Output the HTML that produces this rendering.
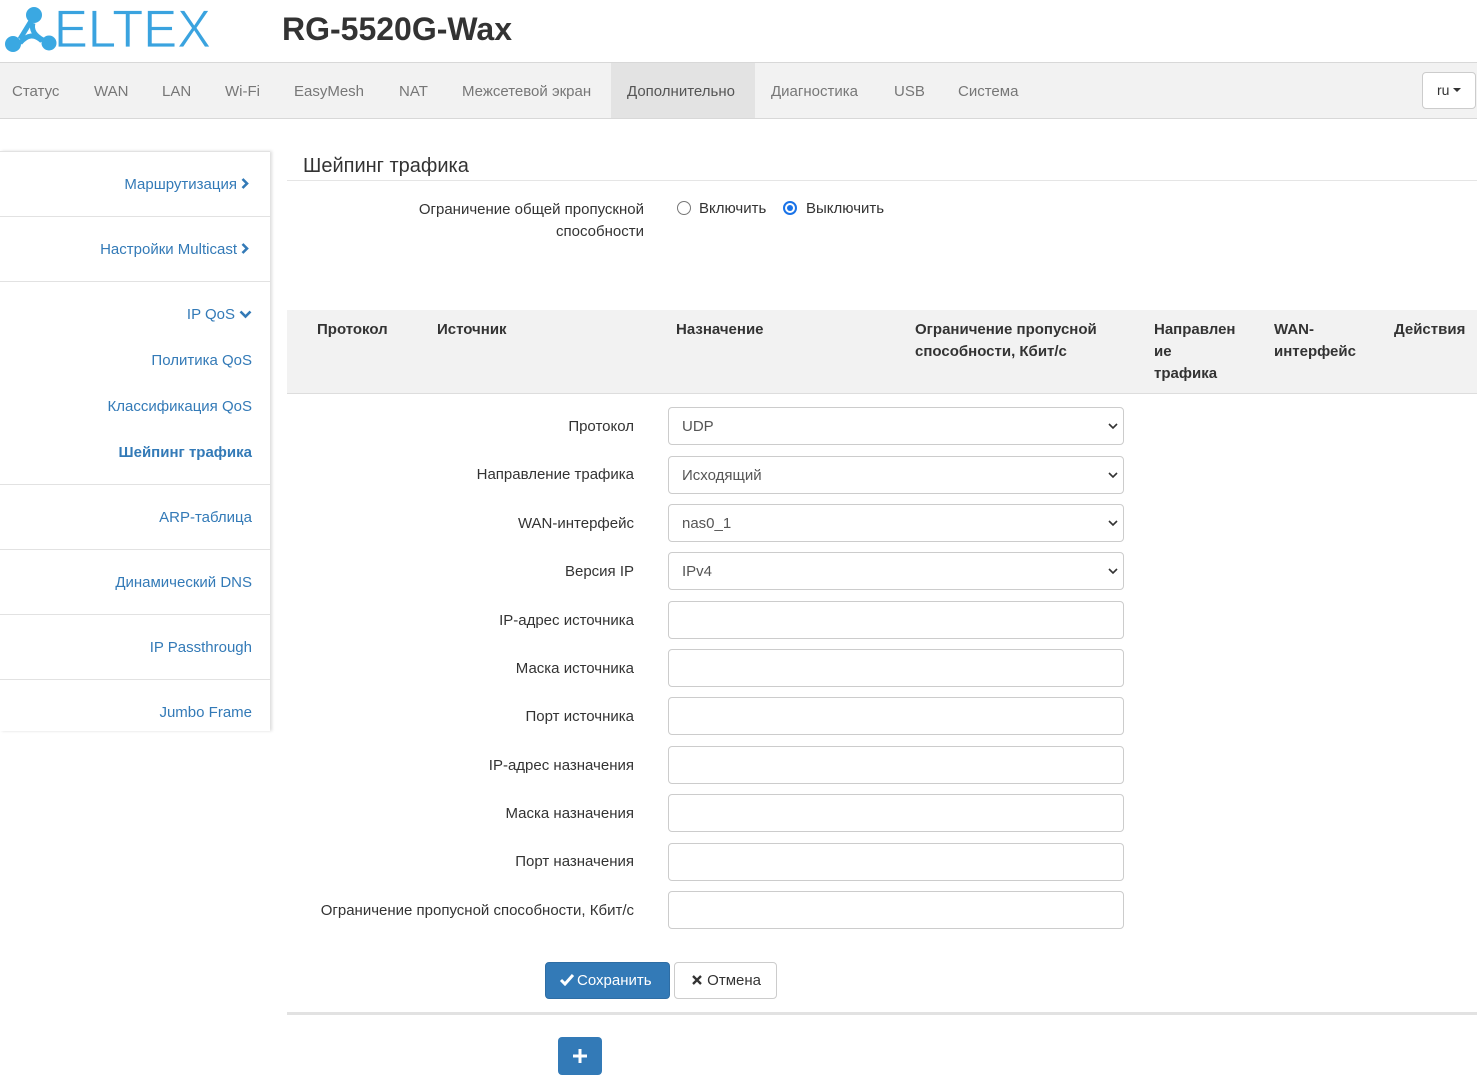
<!DOCTYPE html>
<html><head><meta charset="utf-8"><style>
*{box-sizing:border-box;margin:0;padding:0}
body{width:1477px;height:1076px;position:relative;background:#fff;font-family:"Liberation Sans",Arial,sans-serif;color:#333;overflow:hidden;font-size:15px}
.a{position:absolute;white-space:nowrap}
.nav{position:absolute;left:0;top:62px;width:1477px;height:57px;background:#f2f2f2;border-top:1px solid #d8d8d8;border-bottom:1px solid #d8d8d8}
.nav span{position:absolute;top:20px;color:#777;font-size:15px}
.side{position:absolute;left:0;top:151px;width:270px;height:580px;box-shadow:2px 0 3px #ddd}
.line{position:absolute;left:0;width:270px;height:1px;background:#e2e2e2}
.sl{position:absolute;right:18px;color:#337ab7;font-size:15px;white-space:nowrap}
.sl svg{margin-left:4px;vertical-align:0}
.lbl{position:absolute;right:843px;font-size:15px;color:#333;white-space:nowrap}
.inp{position:absolute;left:668px;width:456px;height:38px;border:1px solid #ccc;border-radius:4px;padding:10px 13px;font-size:15px;color:#555}
.inp svg{position:absolute;right:5px;top:14px}
.th{position:absolute;font-weight:bold;font-size:15px;line-height:22px;color:#333;top:319px}
</style></head><body>
<svg class="a" style="left:3px;top:6px" width="56" height="46" viewBox="0 0 56 46">
<g fill="#3aa8e2"><circle cx="31" cy="9" r="8"/><circle cx="10" cy="38" r="8"/><circle cx="46" cy="37" r="7.5"/></g>
<path d="M28 15 L17 33 M17 37 Q28 24 39 35 M30 17 Q27 27 40 34" stroke="#3aa8e2" stroke-width="5" fill="none"/>
</svg>
<svg class="a" style="left:52px;top:4px" width="170" height="50"><text x="2" y="43" font-family="Liberation Sans" font-size="53" fill="#3aa3df" stroke="#fff" stroke-width="0.8" textLength="157" lengthAdjust="spacingAndGlyphs">ELTEX</text></svg>
<div class="a" style="left:282px;top:11px;font-size:32px;font-weight:bold;color:#333">RG-5520G-Wax</div>
<div class="nav">
<div style="position:absolute;left:611px;top:0;width:144px;height:55px;background:#e3e3e3"></div>
<span style="left:12px">Статус</span><span style="left:94px">WAN</span><span style="left:162px">LAN</span><span style="left:225px">Wi-Fi</span><span style="left:294px">EasyMesh</span><span style="left:399px">NAT</span><span style="left:462px">Межсетевой экран</span><span style="left:627px;color:#555">Дополнительно</span><span style="left:771px">Диагностика</span><span style="left:894px">USB</span><span style="left:958px">Система</span>
<div style="position:absolute;left:1422px;top:9px;width:54px;height:37px;background:#fff;border:1px solid #ccc;border-radius:4px;font-size:14px;padding:9px 0 0 14px;color:#333">ru <svg width="8" height="5" style="vertical-align:2px"><path d="M0 0h8L4 4z" fill="#333"/></svg></div>
</div>
<div class="side">
<div class="line" style="top:0"></div>
<div class="sl" style="top:25px;right:21px">Маршрутизация<svg width="8" height="11"><path d="M1.5 1l4.5 4.5-4.5 4.5" stroke="#337ab7" stroke-width="2.6" fill="none"/></svg></div>
<div class="line" style="top:65px"></div>
<div class="sl" style="top:90px;right:21px">Настройки Multicast<svg width="8" height="11"><path d="M1.5 1l4.5 4.5-4.5 4.5" stroke="#337ab7" stroke-width="2.6" fill="none"/></svg></div>
<div class="line" style="top:130px"></div>
<div class="sl" style="top:155px;right:18px">IP QoS<svg width="13" height="9"><path d="M1.5 1.5l5 5 5-5" stroke="#337ab7" stroke-width="2.6" fill="none"/></svg></div>
<div class="sl" style="top:201px">Политика QoS</div>
<div class="sl" style="top:247px">Классификация QoS</div>
<div class="sl" style="top:293px;font-weight:bold">Шейпинг трафика</div>
<div class="line" style="top:333px"></div>
<div class="sl" style="top:358px">ARP-таблица</div>
<div class="line" style="top:398px"></div>
<div class="sl" style="top:423px">Динамический DNS</div>
<div class="line" style="top:463px"></div>
<div class="sl" style="top:488px">IP Passthrough</div>
<div class="line" style="top:528px"></div>
<div class="sl" style="top:553px">Jumbo Frame</div>
</div>
<div class="a" style="left:303px;top:155px;font-size:20px;color:#333">Шейпинг трафика</div>
<div class="a" style="left:287px;top:180px;width:1190px;height:1px;background:#e5e5e5"></div>
<div class="a" style="left:400px;top:199px;text-align:right;line-height:22px;width:244px;white-space:normal">Ограничение общей пропускной способности</div>
<div class="a" style="left:677px;top:201px;width:14px;height:14px;border:1px solid #777;border-radius:50%"></div>
<div class="a" style="left:699px;top:200px">Включить</div>
<div class="a" style="left:783px;top:201px;width:14px;height:14px;border:2px solid #1a73e8;border-radius:50%"><div style="margin:2px;width:6px;height:6px;border-radius:50%;background:#1a73e8"></div></div>
<div class="a" style="left:806px;top:200px">Выключить</div>
<div class="a" style="left:287px;top:310px;width:1190px;height:84px;background:#f2f2f2;border-bottom:1px solid #ddd"></div>
<div class="th" style="left:317px">Протокол</div>
<div class="th" style="left:437px">Источник</div>
<div class="th" style="left:676px">Назначение</div>
<div class="th" style="left:915px">Ограничение пропусной<br>способности, Кбит/с</div>
<div class="th" style="left:1154px">Направлен<br>ие<br>трафика</div>
<div class="th" style="left:1274px">WAN-<br>интерфейс</div>
<div class="th" style="left:1394px">Действия</div>

<div class="lbl" style="top:418px">Протокол</div><div class="inp" style="top:407px">UDP<svg width="10" height="8"><path d="M1 2l4 4 4-4" stroke="#333" stroke-width="1.6" fill="none"/></svg></div>
<div class="lbl" style="top:466px">Направление трафика</div><div class="inp" style="top:456px">Исходящий<svg width="10" height="8"><path d="M1 2l4 4 4-4" stroke="#333" stroke-width="1.6" fill="none"/></svg></div>
<div class="lbl" style="top:515px">WAN-интерфейс</div><div class="inp" style="top:504px">nas0_1<svg width="10" height="8"><path d="M1 2l4 4 4-4" stroke="#333" stroke-width="1.6" fill="none"/></svg></div>
<div class="lbl" style="top:563px">Версия IP</div><div class="inp" style="top:552px">IPv4<svg width="10" height="8"><path d="M1 2l4 4 4-4" stroke="#333" stroke-width="1.6" fill="none"/></svg></div>
<div class="lbl" style="top:612px">IP-адрес источника</div><div class="inp" style="top:601px"></div>
<div class="lbl" style="top:660px">Маска источника</div><div class="inp" style="top:649px"></div>
<div class="lbl" style="top:708px">Порт источника</div><div class="inp" style="top:697px"></div>
<div class="lbl" style="top:757px">IP-адрес назначения</div><div class="inp" style="top:746px"></div>
<div class="lbl" style="top:805px">Маска назначения</div><div class="inp" style="top:794px"></div>
<div class="lbl" style="top:853px">Порт назначения</div><div class="inp" style="top:843px"></div>
<div class="lbl" style="top:902px">Ограничение пропусной способности, Кбит/с</div><div class="inp" style="top:891px"></div>

<div class="a" style="left:545px;top:962px;width:125px;height:37px;background:#337ab7;border:1px solid #2e6da4;border-radius:4px;color:#fff;padding:9px 0 0 13px"><svg width="18" height="13" style="vertical-align:-1px"><path d="M2 7l4 4 8-9" stroke="#fff" stroke-width="3" fill="none"/></svg>Сохранить</div>
<div class="a" style="left:674px;top:962px;width:103px;height:37px;background:#fff;border:1px solid #ccc;border-radius:4px;color:#333;padding:9px 0 0 16px"><svg width="12" height="11" style="vertical-align:-1px"><path d="M2 1l8 8M10 1l-8 8" stroke="#333" stroke-width="2.3"/></svg> Отмена</div>
<div class="a" style="left:287px;top:1012px;width:1190px;height:3px;background:#e2e2e2"></div>
<div class="a" style="left:558px;top:1037px;width:44px;height:38px;background:#337ab7;border-radius:4px"><svg width="44" height="38"><path d="M22 12v14M15 19h14" stroke="#fff" stroke-width="3"/></svg></div>
</body></html>
